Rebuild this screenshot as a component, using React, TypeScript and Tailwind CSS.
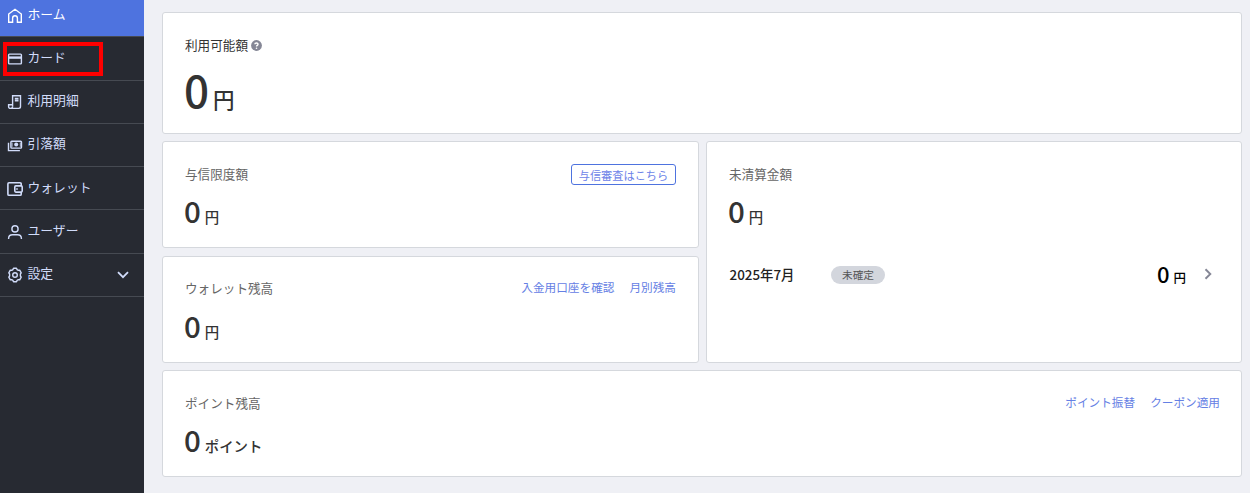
import type { ReactNode } from 'react';

interface NavItem {
  label: string;
  icon: ReactNode;
  height: string;
  active?: boolean;
  marked?: boolean;
  expandable?: boolean;
}

const navItems: NavItem[] = [
  { label: 'ホーム', icon: <HomeIcon />, height: 'h-[37px] pb-[8px]', active: true },
  { label: 'カード', icon: <CardIcon />, height: 'h-11 pb-[3px]', marked: true },
  { label: '利用明細', icon: <ReceiptIcon />, height: 'h-[43px] pb-[4px]' },
  { label: '引落額', icon: <CashIcon />, height: 'h-[43px] pb-[3px]' },
  { label: 'ウォレット', icon: <WalletIcon />, height: 'h-[43px] pb-[2px]' },
  { label: 'ユーザー', icon: <UserIcon />, height: 'h-11 pb-[3px]' },
  { label: '設定', icon: <SettingsIcon />, height: 'h-[43px] pb-[4px]', expandable: true },
];

export default function App() {
  return (
    <div className="flex h-[493px] w-[1250px] overflow-hidden bg-[#eff0f5] font-['Noto_Sans_CJK_JP',sans-serif] text-[#333]">
      <Sidebar />
      <main className="flex flex-1 flex-col pt-3 pr-2 pl-[18px]">
        <Card className="h-[122px] pt-[22px]">
          <div className="flex items-center gap-[3px]">
            <h2 className="text-[12.6px] leading-5">利用可能額</h2>
            <HelpIcon />
          </div>
          <div className="mt-[6px] flex items-baseline gap-[4px] leading-[56px] font-medium">
            <span className="-ml-px text-[44px]">0</span>
            <span className="text-[21.5px]">円</span>
          </div>
        </Card>

        <div className="mt-[7px] grid h-[222px] grid-cols-[537px_536px] gap-x-[7px]">
          <div className="flex flex-col justify-between">
            <Card className="h-[107px] pt-[21px]">
              <CardHeader title="与信限度額">
                <button className="mt-px h-[21px] w-[105px] rounded-[3px] border border-[#4e73df] text-[11.2px] leading-[21px] text-[#6d83e8]">
                  与信審査はこちら
                </button>
              </CardHeader>
              <Amount unit="円" />
            </Card>
            <Card className="h-[107px] pt-[20px]">
              <CardHeader title="ウォレット残高">
                <CardLink label="入金用口座を確認" />
                <CardLink label="月別残高" />
              </CardHeader>
              <div className="pt-px">
                <Amount unit="円" />
              </div>
            </Card>
          </div>

          <Card className="pt-[21px]">
            <CardHeader title="未清算金額" />
            <Amount unit="円" />
            <div className="mt-[21px] flex h-8 items-center text-black">
              <span className="w-[102px] pl-[0.5px] text-[13.4px] font-medium text-[#222]">2025年7月</span>
              <span className="mt-[2px] h-[18px] w-[54px] rounded-full bg-[#d3d6dd] text-center text-[10.7px] leading-[18px] text-[#555]">
                未確定
              </span>
              <span className="-mt-0.5 ml-auto flex items-baseline gap-1 font-medium">
                <span className="text-[22px] leading-8">0</span>
                <span className="text-[12.5px]">円</span>
              </span>
              <svg className="mr-[7px] ml-[18px] h-3 w-2" viewBox="0 0 8 12" fill="none" stroke="#858796" strokeWidth="1.9">
                <path d="M1.5 1.3 6.3 6 1.5 10.7" />
              </svg>
            </div>
          </Card>
        </div>

        <Card className="mt-[7px] h-[107px] pt-[21px] pr-[21px]">
          <CardHeader title="ポイント残高">
            <CardLink label="ポイント振替" />
            <CardLink label="クーポン適用" />
          </CardHeader>
          <Amount unit="ポイント" />
        </Card>
      </main>
    </div>
  );
}

function Sidebar() {
  return (
    <nav className="w-36 shrink-0 bg-[#272a32]">
      {navItems.map((item) => (
        <a
          key={item.label}
          className={`relative flex items-center border-b border-[#464a52] pl-[7px] text-[12.8px] ${item.height} ${
            item.active ? 'bg-[#4e73df] text-white' : 'text-[#d1dcfa]'
          }`}
        >
          <span className="mt-1 mr-[4.5px] shrink-0">{item.icon}</span>
          <span className="-mt-px leading-5">{item.label}</span>
          {item.expandable && (
            <svg className="mt-1 mr-[15px] ml-auto h-2 w-3" viewBox="0 0 12 8" fill="none" stroke="currentColor" strokeWidth="1.8">
              <path d="M1 1.2 6 6.2 11 1.2" />
            </svg>
          )}
          {item.marked && <span className="absolute top-[5px] left-[3px] h-[34px] w-[100px] border-4 border-[#f00]" />}
        </a>
      ))}
    </nav>
  );
}

function Card({ className, children }: { className: string; children: ReactNode }) {
  return (
    <section className={`rounded-[3px] border border-[#d5d8dd] bg-white px-[22px] ${className}`}>{children}</section>
  );
}

function CardHeader({ title, children }: { title: string; children?: ReactNode }) {
  return (
    <div className="flex h-[21px] justify-between">
      <h2 className="text-[12.6px] leading-[21px] text-[#666]">{title}</h2>
      <div className="flex gap-[15px]">{children}</div>
    </div>
  );
}

function CardLink({ label }: { label: string }) {
  return <a className="text-[11.65px] leading-5 text-[#6580e4]">{label}</a>;
}

function Amount({ unit }: { unit: string }) {
  return (
    <div className="mt-[6px] flex items-baseline gap-[4px] leading-10 font-medium">
      <span className="-ml-px text-[29.5px]">0</span>
      <span className="text-[14.4px]">{unit}</span>
    </div>
  );
}

function HelpIcon() {
  return (
    <svg className="h-[11px] w-[11px]" viewBox="0 0 11 11">
      <circle cx="5.5" cy="5.5" r="5.4" fill="#858796" />
      <path d="M3.9 4.3C4 2.5 7.1 2.6 7 4.4 6.9 5.4 5.5 5.4 5.5 6.6" fill="none" stroke="#fff" strokeWidth="1.4" />
      <circle cx="5.5" cy="8.2" r=".8" fill="#fff" />
    </svg>
  );
}

function Icon({ children }: { children: ReactNode }) {
  return (
    <svg className="h-4 w-4" viewBox="0 0 16 16" fill="none" stroke="currentColor" strokeWidth="1.4">
      {children}
    </svg>
  );
}

function HomeIcon() {
  return (
    <Icon>
      <path d="M1.7 14.3V6L8 1.3 14.3 6v8.3H10.4V10.2a2.4 2.4 0 0 0-4.8 0v4.1Z" />
    </Icon>
  );
}

function CardIcon() {
  return (
    <Icon>
      <rect x="1.6" y="3.1" width="12.8" height="9.8" rx=".8" />
      <path d="M1.6 6.6h12.8" strokeWidth="2.4" />
    </Icon>
  );
}

function ReceiptIcon() {
  return (
    <Icon>
      <path d="M5.6 12.2V1.7h7.9v10.9c0 1-.8 1.8-1.8 1.8H3.4c-1 0-1.8-.7-1.8-1.7v-1.9h4" />
      <path d="M5.6 12.2c0 1.2-.7 2.2-1.9 2.2" />
      <path d="M7.8 4.6h3.7M7.8 6.6h3.7" strokeWidth="1.6" />
    </Icon>
  );
}

function CashIcon() {
  return (
    <Icon>
      <rect x="3.9" y="3.2" width="10.6" height="6.9" rx=".8" />
      <path d="M1.5 4.7v7.9h11.4" />
      <circle cx="9.2" cy="6.6" r="2" fill="currentColor" stroke="none" />
      <path d="M5.1 4.5v4.3M13.3 4.5v4.3" strokeWidth=".8" />
    </Icon>
  );
}

function WalletIcon() {
  return (
    <Icon>
      <path d="M14.2 5V2.9c0-.7-.4-1.1-1.1-1.1H2c-.7 0-1.1.4-1.1 1.1v10.3c0 .7.4 1.1 1.1 1.1h11.1c.7 0 1.1-.4 1.1-1.1V11" strokeWidth="1.6" />
      <rect x="7.8" y="4.9" width="7.4" height="6.2" rx="1" strokeWidth="1.6" />
      <path d="M10 7v2" strokeWidth="1.2" />
    </Icon>
  );
}

function UserIcon() {
  return (
    <Icon>
      <circle cx="8" cy="4.9" r="3.1" />
      <path d="M1.6 15v-.5c0-2.2 1.8-3.7 4-3.7h4.8c2.2 0 4 1.5 4 3.7v.5" />
    </Icon>
  );
}

function SettingsIcon() {
  return (
    <Icon>
      <path d="M5.9 2.6 6.5 1.3h3l.6 1.3 1.2.7 1.4-.1 1.5 2.6-.8 1.2v2l.8 1.2-1.5 2.6-1.4-.1-1.2.7-.6 1.3h-3l-.6-1.3-1.2-.7-1.4.1-1.5-2.6.8-1.2V7l-.8-1.2 1.5-2.6 1.4.1Z" strokeLinejoin="round" />
      <circle cx="8" cy="8" r="2.3" />
    </Icon>
  );
}
